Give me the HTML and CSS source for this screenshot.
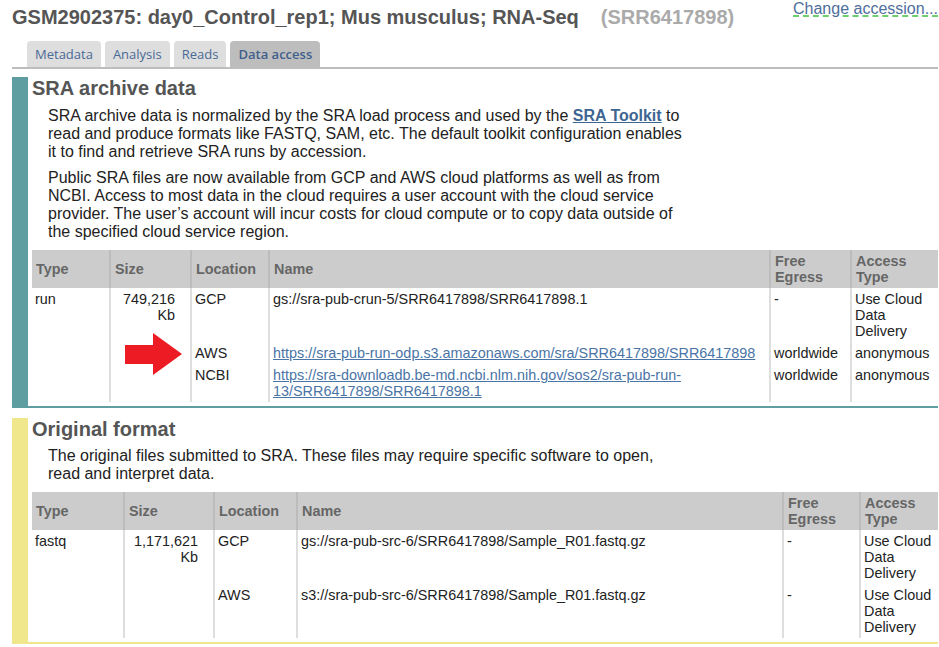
FILE: index.html
```html
<!DOCTYPE html>
<html>
<head>
<meta charset="utf-8">
<title>SRA Run Browser</title>
<link rel="stylesheet" href="styles.css">
</head>
<body>
<div class="page">
  <div class="top">
    <h1 class="title">GSM2902375: day0_Control_rep1; Mus musculus; RNA-Seq<span class="acc">(SRR6417898)</span></h1>
    <a class="change" href="#">Change accession...</a>
  </div>
  <div class="tabs">
    <span class="tab">Metadata</span>
    <span class="tab">Analysis</span>
    <span class="tab">Reads</span>
    <span class="tab active">Data access</span>
  </div>

  <section class="sec sec-sra">
    <h2>SRA archive data</h2>
    <p>SRA archive data is normalized by the SRA load process and used by the <a class="toolkit" href="#">SRA Toolkit</a> to read and produce formats like FASTQ, SAM, etc. The default toolkit configuration enables it to find and retrieve SRA runs by accession.</p>
    <p>Public SRA files are now available from GCP and AWS cloud platforms as well as from NCBI. Access to most data in the cloud requires a user account with the cloud service provider. The user’s account will incur costs for cloud compute or to copy data outside of the specified cloud service region.</p>
    <table class="files">
      <colgroup>
        <col style="width:77px"><col style="width:81px"><col style="width:78px"><col style="width:501px"><col style="width:81px"><col style="width:88px">
      </colgroup>
      <thead>
        <tr><th>Type</th><th>Size</th><th>Location</th><th>Name</th><th>Free Egress</th><th>Access Type</th></tr>
      </thead>
      <tbody>
        <tr><td>run</td><td class="size">749,216 Kb</td><td>GCP</td><td>gs://sra-pub-crun-5/SRR6417898/SRR6417898.1</td><td>-</td><td>Use Cloud Data Delivery</td></tr>
        <tr><td></td><td></td><td>AWS</td><td><a href="#">https://sra-pub-run-odp.s3.amazonaws.com/sra/SRR6417898/SRR6417898</a></td><td>worldwide</td><td>anonymous</td></tr>
        <tr><td></td><td></td><td>NCBI</td><td><a href="#">https://sra-downloadb.be-md.ncbi.nlm.nih.gov/sos2/sra-pub-run-13/SRR6417898/SRR6417898.1</a></td><td>worldwide</td><td>anonymous</td></tr>
      </tbody>
    </table>
    <svg class="arrow" width="58" height="43" viewBox="0 0 58 43"><polygon points="0,12 28,12 28,0 57,21 28,42 28,31 0,31" fill="#ed1c24"/></svg>
  </section>

  <section class="sec sec-orig">
    <h2>Original format</h2>
    <p>The original files submitted to SRA. These files may require specific software to open, read and interpret data.</p>
    <table class="files">
      <colgroup>
        <col style="width:91px"><col style="width:90px"><col style="width:83px"><col style="width:486px"><col style="width:77px"><col style="width:79px">
      </colgroup>
      <thead>
        <tr><th>Type</th><th>Size</th><th>Location</th><th>Name</th><th>Free Egress</th><th>Access Type</th></tr>
      </thead>
      <tbody>
        <tr><td>fastq</td><td class="size">1,171,621 Kb</td><td>GCP</td><td>gs://sra-pub-src-6/SRR6417898/Sample_R01.fastq.gz</td><td>-</td><td>Use Cloud Data Delivery</td></tr>
        <tr><td></td><td></td><td>AWS</td><td>s3://sra-pub-src-6/SRR6417898/Sample_R01.fastq.gz</td><td>-</td><td>Use Cloud Data Delivery</td></tr>
      </tbody>
    </table>
  </section>
</div>
</body>
</html>
```

FILE: styles.css
```css
html, body {
  margin: 0;
  padding: 0;
  background: #fff;
}
body {
  font-family: "Liberation Sans", Arial, sans-serif;
  color: #222;
}
.page {
  margin-left: 12px;
  width: 926px;
}
.top {
  display: flex;
  justify-content: space-between;
  align-items: flex-start;
}
.title {
  margin: 6px 0 0 0;
  font-size: 20px;
  line-height: 23px;
  font-weight: bold;
  color: #555;
  white-space: nowrap;
}
.acc {
  color: #aaa;
  margin-left: 22px;
}
.change {
  font-size: 16px;
  line-height: 18px;
  color: #4f6e9c;
  text-decoration: underline dashed #3fbf3f;
  text-underline-offset: 2px;
  white-space: nowrap;
}
.tabs {
  display: flex;
  gap: 4px;
  margin-top: 12px;
  padding-left: 15px;
  border-bottom: 2px solid #bdbdbd;
}
.tab {
  font-family: "Open Sans", sans-serif;
  font-size: 13px;
  line-height: 18px;
  padding: 4px 8px;
  background: #dedede;
  color: #4a6a96;
  border-radius: 4px 4px 0 0;
}
.tab.active {
  background: #bdbdbd;
  color: #3f5f8c;
  font-weight: 600;
}
.sec {
  position: relative;
  padding: 0 0 4px 4px;
}
.sec-sra {
  margin-top: 8px;
  border-left: 16px solid #5f9ea0;
  border-bottom: 2px solid #5f9ea0;
}
.sec-orig {
  margin-top: 10px;
  border-left: 16px solid #f0e68c;
  border-bottom: 2px solid #f0e68c;
}
.sec h2 {
  margin: 0;
  font-size: 20px;
  line-height: 22px;
  font-weight: bold;
  color: #555;
}
.sec p {
  margin: 8px 0 0 0;
  padding-left: 16px;
  max-width: 640px;
  font-size: 16px;
  line-height: 18px;
  color: #222;
}
.sec-orig p {
  margin-top: 7px;
}
.toolkit {
  font-weight: bold;
  color: #3d6592;
  text-decoration: underline;
}
.files {
  margin-top: 9px;
  width: 906px;
  table-layout: fixed;
  border-collapse: separate;
  border-spacing: 0;
  font-size: 14.4px;
  line-height: 16px;
}
.files th {
  background: #cccccc;
  color: #666;
  font-weight: bold;
  text-align: left;
  vertical-align: middle;
  padding: 3px 3px 3px 4px;
  border-left: 2px solid #bcbcbc;
}
.files td {
  vertical-align: top;
  padding: 3px 2px 3px 3px;
  border-left: 2px solid #dedede;
  color: #222;
}
.files th:first-child,
.files td:first-child {
  border-left: none;
}
.files td.size {
  text-align: right;
  padding-right: 15px;
}
.files a {
  color: #4a74a6;
  text-decoration: underline;
}
.arrow {
  position: absolute;
  left: 97px;
  top: 256px;
}
```
